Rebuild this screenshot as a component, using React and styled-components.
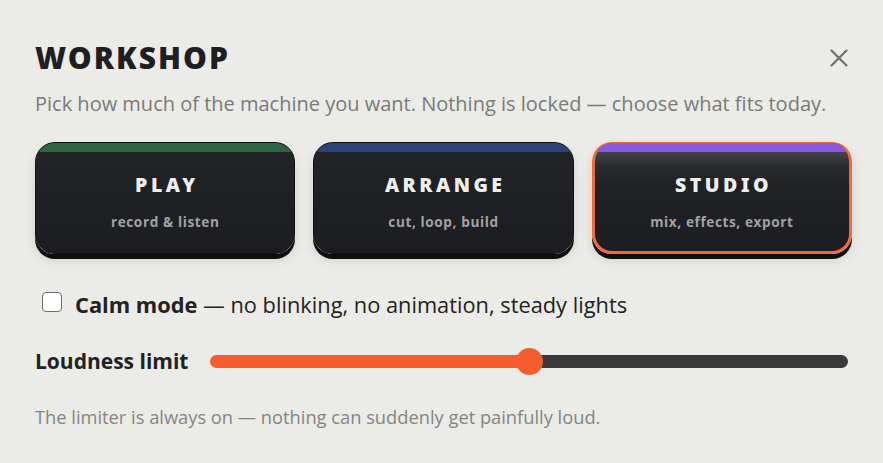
import React, { useState } from "react";
import styled, { createGlobalStyle } from "styled-components";

const GlobalStyle = createGlobalStyle`
  html, body {
    margin: 0;
    padding: 0;
    background: #ebebe7;
  }
  body {
    font-family: "Open Sans", "Noto Sans", sans-serif;
    color: #222;
  }
`;

const modes = [
  { key: "play", title: "PLAY", sub: "record & listen", stripe: "#2e6542" },
  { key: "arrange", title: "ARRANGE", sub: "cut, loop, build", stripe: "#2c4378" },
  { key: "studio", title: "STUDIO", sub: "mix, effects, export", stripe: "#8a5ae6" },
];

export default function App() {
  const [mode, setMode] = useState("studio");
  const [calm, setCalm] = useState(false);
  const [limit, setLimit] = useState(50);

  return (
    <Panel>
      <GlobalStyle />
      <Header>
        <Title>WORKSHOP</Title>
        <CloseButton aria-label="Close">
          <svg width="20" height="20" viewBox="0 0 20 20">
            <path d="M2.5 2.5 L17.5 17.5 M17.5 2.5 L2.5 17.5" stroke="#6f6f6f" strokeWidth="2.2" strokeLinecap="round" />
          </svg>
        </CloseButton>
      </Header>
      <Intro>Pick how much of the machine you want. Nothing is locked — choose what fits today.</Intro>

      <Cards>
        {modes.map((m) => (
          <Card key={m.key} $active={mode === m.key} onClick={() => setMode(m.key)}>
            <Stripe $color={m.stripe} />
            <CardTitle>{m.title}</CardTitle>
            <CardSub>{m.sub}</CardSub>
          </Card>
        ))}
      </Cards>

      <CalmRow>
        <Check type="checkbox" checked={calm} onChange={(e) => setCalm(e.target.checked)} />
        <span>
          <strong>Calm mode</strong> — no blinking, no animation, steady lights
        </span>
      </CalmRow>

      <SliderRow>
        <SliderLabel>Loudness limit</SliderLabel>
        <Range
          type="range"
          min="0"
          max="100"
          value={limit}
          onChange={(e) => setLimit(+e.target.value)}
          style={{ "--pct": `${limit}%` }}
        />
      </SliderRow>

      <Note>The limiter is always on — nothing can suddenly get painfully loud.</Note>
    </Panel>
  );
}

const Panel = styled.div`
  padding: 36px 31px 30px 35px;
  box-sizing: border-box;
  width: 883px;
`;

const Header = styled.div`
  display: flex;
  align-items: center;
  justify-content: space-between;
`;

const Title = styled.h1`
  margin: 0;
  font-family: "Noto Sans", "Open Sans", sans-serif;
  font-weight: 900;
  font-size: 30px;
  letter-spacing: 2px;
  line-height: 44px;
  color: #1f1f22;
`;

const CloseButton = styled.button`
  border: none;
  background: none;
  padding: 0;
  margin-right: 3px;
  width: 20px;
  height: 20px;
  cursor: pointer;
  display: flex;
`;

const Intro = styled.p`
  margin: 10px 0 0;
  font-size: 20px;
  line-height: 28px;
  color: #7a7a78;
`;

const Cards = styled.div`
  display: grid;
  grid-template-columns: repeat(3, 1fr);
  gap: 18px;
  margin-top: 24px;
`;

const Card = styled.button`
  position: relative;
  overflow: hidden;
  height: 112px;
  box-sizing: border-box;
  border-radius: 20px;
  border: ${(p) => (p.$active ? "3px solid #f0693a" : "1px solid #111214")};
  border-top-width: ${(p) => (p.$active ? "1.5px" : "1px")};
  background: ${(p) =>
    p.$active
      ? "linear-gradient(#56575c 0px, #2c2d31 22px, #212226 40px, #1c1d20 100%)"
      : "linear-gradient(#232428, #1c1d20)"};
  box-shadow: 0 5px 0 #0e0e10, 0 6px 12px rgba(0, 0, 0, 0.12);
  display: flex;
  flex-direction: column;
  align-items: center;
  padding: 0;
  cursor: pointer;
  font-family: inherit;
`;

const Stripe = styled.span`
  display: block;
  align-self: stretch;
  height: 9px;
  background: ${(p) => p.$color};
  margin-bottom: 20px;
`;

const CardTitle = styled.span`
  font-family: "Noto Sans", "Open Sans", sans-serif;
  font-weight: 900;
  font-size: 19.5px;
  letter-spacing: 3.5px;
  margin-right: -3.5px;
  color: #efefef;
  line-height: 26px;
`;

const CardSub = styled.span`
  margin-top: 14px;
  font-size: 13.6px;
  font-weight: 700;
  letter-spacing: 0.6px;
  color: #a2a2a6;
`;

const CalmRow = styled.label`
  display: flex;
  align-items: center;
  gap: 13px;
  margin-top: 36px;
  padding-left: 7px;
  font-size: 21.8px;
  color: #222;
  strong {
    font-weight: 700;
  }
`;

const Check = styled.input`
  appearance: none;
  width: 20px;
  height: 20px;
  margin: 0;
  margin-top: -5px;
  border: 1.5px solid #6b6b6b;
  border-radius: 4px;
  background: #fff;
`;

const SliderRow = styled.div`
  display: flex;
  align-items: center;
  gap: 22px;
  margin-top: 28px;
`;

const SliderLabel = styled.span`
  font-size: 21px;
  font-weight: 700;
  color: #222;
  white-space: nowrap;
`;

const Range = styled.input`
  flex: 1;
  appearance: none;
  height: 13px;
  margin: 0 4px 0 0;
  border-radius: 7px;
  background: linear-gradient(to right, #f65d2e var(--pct), #3a3a3a var(--pct));
  &::-webkit-slider-thumb {
    appearance: none;
    width: 27px;
    height: 27px;
    border-radius: 50%;
    background: #f65d2e;
    border: none;
  }
`;

const Note = styled.p`
  margin: 29px 0 0;
  font-size: 18.3px;
  color: #858583;
`;
